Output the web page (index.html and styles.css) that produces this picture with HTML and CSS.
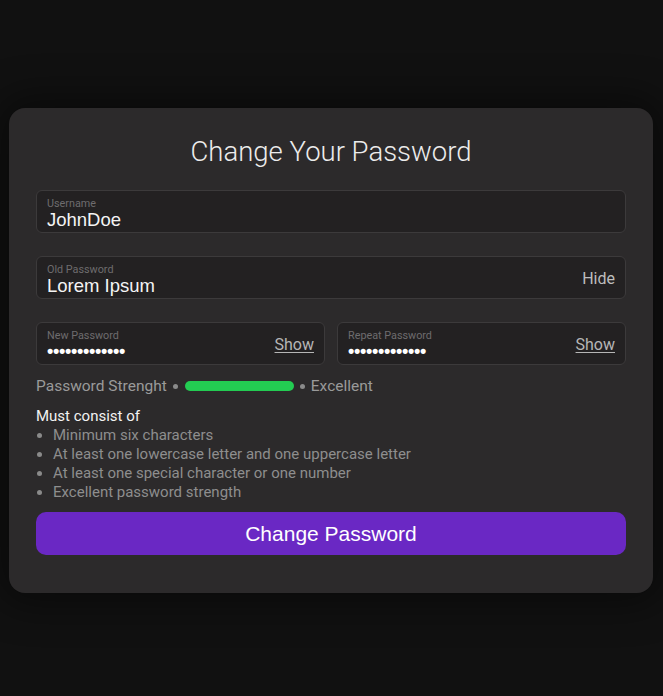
FILE: index.html
```html
<!DOCTYPE html>
<html lang="en">
<head>
<meta charset="utf-8">
<title>Change Your Password</title>
<link rel="stylesheet" href="styles.css">
</head>
<body>
<main class="page">
  <form class="card">
    <h1 class="title">Change Your Password</h1>
    <div class="field">
      <div class="field-body">
        <span class="label">Username</span>
        <span class="value">JohnDoe</span>
      </div>
    </div>
    <div class="field">
      <div class="field-body">
        <span class="label">Old Password</span>
        <span class="value">Lorem Ipsum</span>
      </div>
      <span class="toggle">Hide</span>
    </div>
    <div class="row">
      <div class="field">
        <div class="field-body">
          <span class="label">New Password</span>
          <span class="value dots">•••••••••••••</span>
        </div>
        <span class="toggle link">Show</span>
      </div>
      <div class="field">
        <div class="field-body">
          <span class="label">Repeat Password</span>
          <span class="value dots">•••••••••••••</span>
        </div>
        <span class="toggle link">Show</span>
      </div>
    </div>
    <div class="strength">
      <span>Password Strenght</span>
      <span class="dot"></span>
      <span class="bar"></span>
      <span class="dot"></span>
      <span>Excellent</span>
    </div>
    <div class="rules">
      <p class="rules-title">Must consist of</p>
      <ul class="rules-list">
        <li>Minimum six characters</li>
        <li>At least one lowercase letter and one uppercase letter</li>
        <li>At least one special character or one number</li>
        <li>Excellent password strength</li>
      </ul>
    </div>
    <button type="button" class="submit">Change Password</button>
  </form>
</main>
</body>
</html>
```
FILE: styles.css
```css
* { box-sizing: border-box; }
html, body { margin: 0; padding: 0; }
body {
  background: #111111;
  font-family: Roboto, "Liberation Sans", sans-serif;
  width: 663px;
  height: 696px;
  overflow: hidden;
}
.page {
  padding: 108px 10px 0 9px;
}
.card {
  background: #2c2a2b;
  border-radius: 16px;
  padding: 27px 27px 38px 27px;
  box-shadow: 0 0 40px 10px rgba(0, 0, 0, 0.45);
  display: flex;
  flex-direction: column;
}
.title {
  margin: 0 0 21px;
  text-align: center;
  font-weight: 300;
  font-size: 27.5px;
  line-height: 34px;
  color: #ececec;
}
.field {
  display: flex;
  align-items: center;
  justify-content: space-between;
  height: 43px;
  border: 1px solid #3c3a3b;
  border-radius: 6px;
  background: #232122;
  padding: 0 10px 0 10px;
  margin-bottom: 23px;
}
.field-body {
  display: flex;
  flex-direction: column;
  padding-top: 4px;
}
.label {
  font-size: 10.8px;
  line-height: 12px;
  color: #6e6c6e;
}
.value {
  font-family: "Liberation Sans", Arial, sans-serif;
  font-size: 18.5px;
  line-height: 21px;
  margin-top: -1px;
  color: #f4f4f4;
}
.value.dots {
  font-size: 18px;
  font-weight: 700;
  letter-spacing: -0.3px;
  line-height: 20px;
  margin-top: -1px;
  color: #ffffff;
}
.toggle {
  font-size: 16px;
  color: #bdbdbd;
  padding-top: 1px;
}
.toggle.link {
  text-decoration: underline;
  text-underline-offset: 2px;
  color: #b6b6b6;
}
.row {
  display: grid;
  grid-template-columns: 1fr 1fr;
  gap: 12px;
}
.row .field { margin-bottom: 0; }
.strength {
  display: flex;
  align-items: center;
  gap: 6px;
  margin-top: 11px;
  font-size: 15.5px;
  line-height: 20px;
  color: #9a9a9a;
}
.dot {
  width: 5px;
  height: 5px;
  border-radius: 50%;
  background: #8a8a8a;
}
.bar {
  width: 109px;
  height: 10px;
  border-radius: 5px;
  margin-left: 1px;
  background: #23cc52;
}
.rules {
  margin-top: 11px;
  font-size: 15px;
  line-height: 19px;
}
.rules-title {
  margin: 0;
  color: #f2f2f2;
}
.rules-list {
  margin: 0;
  padding: 0;
  list-style: none;
  color: #8e8e8e;
}
.rules-list li {
  display: flex;
  align-items: center;
}
.rules-list li::before {
  content: "";
  width: 5px;
  height: 5px;
  border-radius: 50%;
  background: #8a8a8a;
  margin: 0 11px 0 1px;
}
.submit {
  margin-top: 10px;
  height: 43px;
  border: 0;
  border-radius: 10px;
  background: #6a28c4;
  color: #ffffff;
  font-family: "Liberation Sans", Arial, sans-serif;
  font-size: 21px;
}
```
